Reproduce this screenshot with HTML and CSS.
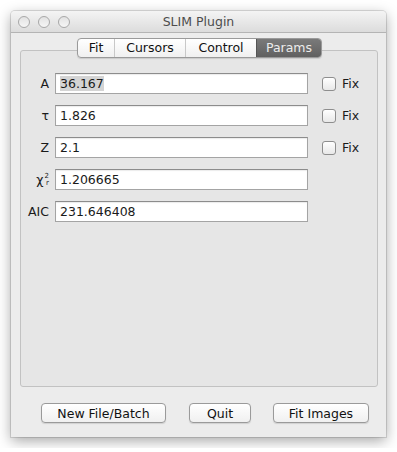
FILE: index.html
```html
<!DOCTYPE html>
<html lang="en">
<head>
<meta charset="UTF-8">
<meta name="viewport" content="width=device-width, initial-scale=1.0">
<title>SLIM Plugin</title>
<link rel="stylesheet" href="styles.css">
</head>
<body>

<!-- Window -->
<div class="window">
  <div class="titlebar">
    <div class="lights">
      <span class="light"></span>
      <span class="light"></span>
      <span class="light"></span>
    </div>
    <div class="title">SLIM Plugin</div>
  </div>

  <div class="content">
    <!-- Tabs -->
    <div class="tabs">
      <div class="tab tab-fit">Fit</div>
      <div class="tab tab-cursors">Cursors</div>
      <div class="tab tab-control">Control</div>
      <div class="tab tab-params active">Params</div>
    </div>

    <!-- Params panel -->
    <div class="panel">
      <div class="row">
        <div class="label">A</div>
        <div class="field"><span class="sel">36.167</span></div>
        <label class="fix"><span class="check"></span>Fix</label>
      </div>
      <div class="row">
        <div class="label">τ</div>
        <div class="field">1.826</div>
        <label class="fix"><span class="check"></span>Fix</label>
      </div>
      <div class="row">
        <div class="label">Z</div>
        <div class="field">2.1</div>
        <label class="fix"><span class="check"></span>Fix</label>
      </div>
      <div class="row">
        <div class="label">χ<span class="supsub"><span>2</span><span>r</span></span></div>
        <div class="field">1.206665</div>
      </div>
      <div class="row">
        <div class="label">AIC</div>
        <div class="field">231.646408</div>
      </div>
    </div>

    <!-- Buttons -->
    <div class="buttons">
      <button class="btn btn-new">New File/Batch</button>
      <button class="btn btn-quit">Quit</button>
      <button class="btn btn-fit">Fit Images</button>
    </div>
  </div>
</div>

</body>
</html>
```

FILE: styles.css
```css
/* Page */
body {
  margin: 0;
  padding: 11px;
  background: #ffffff;
  font-family: 'DejaVu Sans', sans-serif;
  font-size: 12.5px;
  color: #1a1a1a;
}
/* Window */
.window {
  width: 375px;
  height: 426px;
  background: #ececec;
  border-radius: 4px 4px 0 0;
  box-shadow: 0 4px 14px rgba(0, 0, 0, 0.35), 0 0 0 1px rgba(0, 0, 0, 0.12);
  display: flex;
  flex-direction: column;
}
.titlebar {
  height: 21px;
  background: linear-gradient(#f4f4f4, #dcdcdc);
  border-bottom: 1px solid #b4b4b4;
  border-radius: 4px 4px 0 0;
  position: relative;
  display: flex;
  align-items: center;
  justify-content: center;
}
.lights {
  position: absolute;
  left: 7px;
  top: 5px;
  display: flex;
  gap: 8px;
}
.light {
  width: 10px;
  height: 10px;
  border-radius: 50%;
  border: 1px solid #a8a8a8;
  background: linear-gradient(#e2e2e2, #f6f6f6);
}
.title {
  color: #4c4c4c;
  font-size: 12.5px;
}
.content {
  flex: 1;
  padding: 5px 8px 0 9px;
  display: flex;
  flex-direction: column;
}
/* Tabs */
.tabs {
  align-self: flex-start;
  display: flex;
  height: 18px;
  border: 1px solid #9a9a9a;
  border-radius: 4px;
  background: linear-gradient(#ffffff, #f0f0f0);
  margin: 0 0 -8px 57px;
  position: relative;
  z-index: 1;
  box-shadow: 0 1px 1px rgba(0, 0, 0, 0.12);
}
.tab {
  line-height: 18px;
  text-align: center;
  border-left: 1px solid #c8c8c8;
  color: #111;
}
.tab-fit {
  width: 36px;
  border-left: none;
}
.tab-cursors {
  width: 70px;
}
.tab-control {
  width: 70px;
}
.tab-params {
  width: 64px;
}
.tab.active {
  background: linear-gradient(#7a7a7a, #606060);
  color: #ececec;
  border-left: 1px solid #555;
  border-radius: 0 3px 3px 0;
}
/* Panel */
.panel {
  height: 313px;
  background: #e6e6e6;
  border: 1px solid #c2c2c2;
  border-radius: 3px;
  padding: 22px 0 0 0;
  display: flex;
  flex-direction: column;
  gap: 11px;
}
.row {
  display: flex;
  align-items: center;
  height: 21px;
}
.label {
  width: 28px;
  text-align: right;
  margin-right: 6px;
  display: flex;
  justify-content: flex-end;
  align-items: center;
}
.supsub {
  display: inline-flex;
  flex-direction: column;
  font-size: 7px;
  line-height: 7px;
  margin-left: 1px;
}
.field {
  width: 243px;
  height: 19px;
  line-height: 19px;
  padding: 0 4px;
  background: #ffffff;
  border: 1px solid #a4a4a4;
  border-top-color: #8c8c8c;
  box-shadow: inset 0 1px 1px rgba(0, 0, 0, 0.08);
}
.sel {
  background: #d4d4d4;
}
.fix {
  display: flex;
  align-items: center;
  margin-left: 14px;
}
.check {
  width: 12px;
  height: 12px;
  border: 1px solid #8e8e8e;
  border-radius: 3px;
  background: linear-gradient(#ffffff, #e8e8e8);
  margin-right: 6px;
}
/* Buttons */
.buttons {
  display: flex;
  padding: 16px 0 0 21px;
}
.btn {
  height: 20px;
  font-family: 'DejaVu Sans', sans-serif;
  font-size: 12.5px;
  color: #111;
  background: linear-gradient(#ffffff, #f0f0f0);
  border: 1px solid #9a9a9a;
  border-radius: 4px;
  box-shadow: 0 1px 1px rgba(0, 0, 0, 0.12);
  padding: 0;
}
.btn-new {
  width: 125px;
}
.btn-quit {
  width: 62px;
  margin-left: 23px;
}
.btn-fit {
  width: 96px;
  margin-left: 22px;
}
```
